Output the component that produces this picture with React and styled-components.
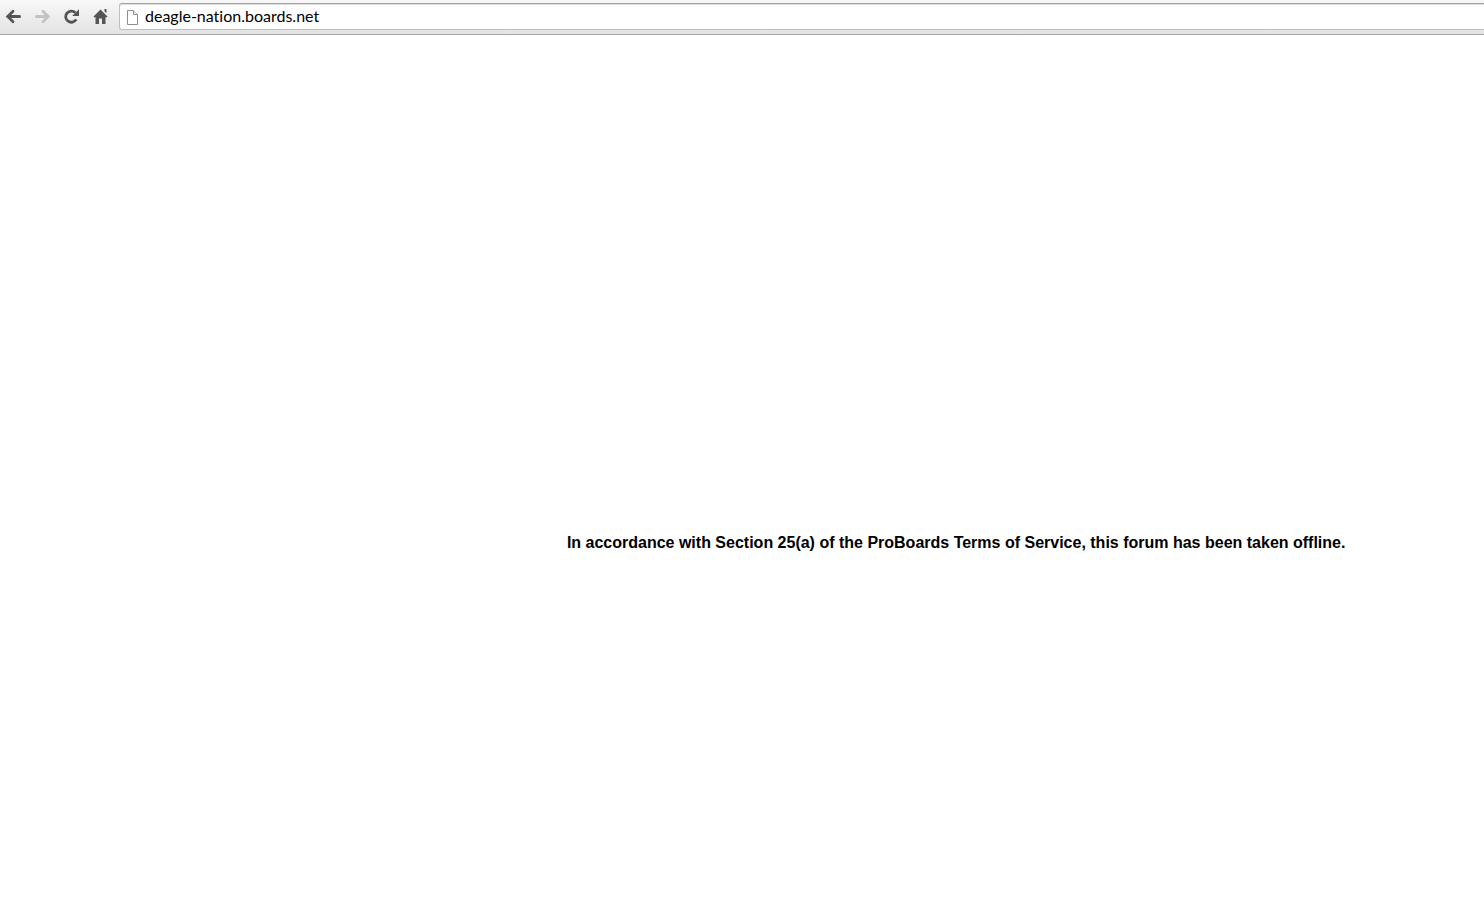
import React from "react";
import styled, { createGlobalStyle } from "styled-components";

const GlobalStyle = createGlobalStyle`
  * { box-sizing: border-box; }
  body { margin: 0; background: #fff; }
`;

const Page = styled.div`
  display: flex;
  flex-direction: column;
  min-height: 100vh;
  overflow-x: hidden;
`;

const Toolbar = styled.header`
  display: flex;
  align-items: flex-start;
  gap: 5px;
  height: 35px;
  padding: 3px 0 0 1px;
  background: linear-gradient(#f8f8f8, #e3e3e3);
  border-bottom: 1px solid #a5a5a5;
`;

const NavButton = styled.button`
  display: flex;
  align-items: center;
  justify-content: center;
  flex: none;
  width: 24px;
  height: 26px;
  padding: 0;
  border: 0;
  background: none;
  color: ${(p) => (p.disabled ? "#c3c3c3" : "#555")};
`;

const AddressBar = styled.form`
  display: flex;
  align-items: center;
  gap: 5px;
  flex: 1;
  height: 27px;
  margin-left: 2px;
  padding-left: 5px;
  background: #fff;
  border: 1px solid #bfbfbf;
  border-top-color: #a3a3a3;
  border-right: 0;
  border-radius: 3px 0 0 3px;
  box-shadow: inset 0 1px 0 #dedede;
`;

const AddressInput = styled.input`
  flex: 1;
  min-width: 0;
  height: 24px;
  padding: 0 0 2px;
  border: 0;
  outline: 0;
  background: none;
  color: #000;
  font: 16px/22px Lato, "Open Sans", sans-serif;
  font-variant-ligatures: none;
`;

const Content = styled.main`
  display: flex;
  flex: 1;
  align-items: center;
  padding: 132px 0 0 38.2%;
`;

const Notice = styled.p`
  margin: 0;
  color: #000;
  font: bold 16px/20px "Liberation Sans", Arial, sans-serif;
  white-space: nowrap;
`;

function ArrowIcon({ forward }) {
  return (
    <svg width="16" height="16" viewBox="0 0 16 16" fill="none" stroke="currentColor" strokeWidth="3" aria-hidden="true">
      <g transform={forward ? "translate(17 0) scale(-1 1)" : undefined}>
        <path d="M3 8.5H14.5" strokeLinecap="round" />
        <path d="M8 3.3L2.8 8.5L8 13.7" strokeLinecap="round" strokeLinejoin="miter" strokeWidth="2.8" />
      </g>
    </svg>
  );
}

function ReloadIcon() {
  return (
    <svg width="16" height="16" viewBox="0 0 16 16" aria-hidden="true">
      <path d="M12.4 4.8A5.6 5.6 0 1 0 13.2 11.4" fill="none" stroke="currentColor" strokeWidth="2.8" />
      <path d="M16 1.2V8H9.2Z" fill="currentColor" />
    </svg>
  );
}

function HomeIcon() {
  return (
    <svg width="16" height="16" viewBox="0 0 16 16" fill="currentColor" aria-hidden="true">
      <path d="M8.5 1.5L15.5 8.5L14.8 9.3H13.5V16H10V10.5H7V16H3.5V9.3H2.2L1.5 8.5Z" />
      <path d="M12.5 1H14.5V5L12.5 3.5Z" />
    </svg>
  );
}

function PageIcon() {
  return (
    <svg width="15" height="16" viewBox="0 0 15 16" fill="#fff" stroke="#8f8f8f" aria-hidden="true">
      <path d="M2.5 1.5H8.5L12.5 5.5V15.5H2.5Z" />
      <path d="M8.5 1.5V5.5H12.5" fill="#f2f2f2" />
    </svg>
  );
}

export default function App() {
  return (
    <Page>
      <GlobalStyle />
      <Toolbar>
        <NavButton type="button" aria-label="Back"><ArrowIcon /></NavButton>
        <NavButton type="button" aria-label="Forward" disabled><ArrowIcon forward /></NavButton>
        <NavButton type="button" aria-label="Reload"><ReloadIcon /></NavButton>
        <NavButton type="button" aria-label="Home"><HomeIcon /></NavButton>
        <AddressBar onSubmit={(e) => e.preventDefault()}>
          <PageIcon />
          <AddressInput aria-label="Address" defaultValue="deagle-nation.boards.net" spellCheck={false} />
        </AddressBar>
      </Toolbar>
      <Content>
        <Notice>In accordance with Section 25(a) of the ProBoards Terms of Service, this forum has been taken offline.</Notice>
      </Content>
    </Page>
  );
}
